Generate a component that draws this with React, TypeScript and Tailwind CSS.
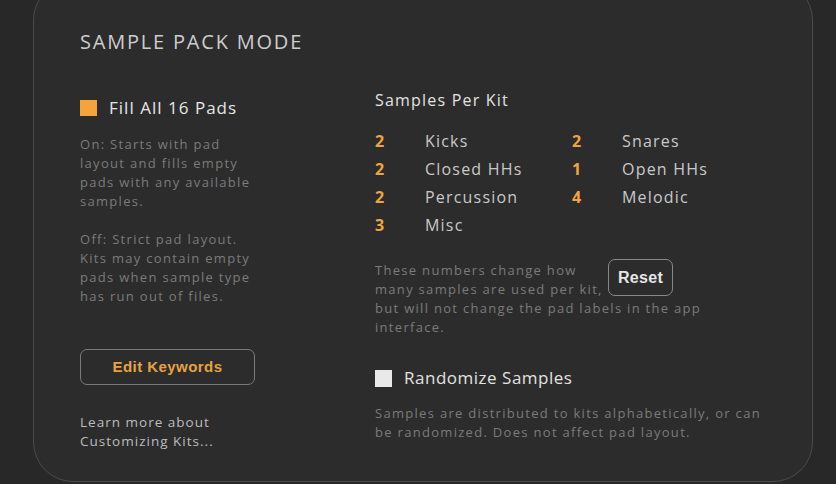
import React from "react";

const rowsLeft = [
  ["2", "Kicks"],
  ["2", "Closed HHs"],
  ["2", "Percussion"],
  ["3", "Misc"],
];
const rowsRight = [
  ["2", "Snares"],
  ["1", "Open HHs"],
  ["4", "Melodic"],
];

function Row({ n, label }: { n: string; label: string }) {
  return (
    <div className="flex h-[28px] items-center">
      <span className="w-[50px] text-[16px] font-bold text-[#f0a53a]">{n}</span>
      <span className="text-[16px] tracking-[0.075em] text-[#c9c9c9]">{label}</span>
    </div>
  );
}

export default function App() {
  return (
    <div
      className="w-[836px] h-[484px] overflow-hidden bg-[#282828]"
      style={{ fontFamily: "'Open Sans', 'Noto Sans', sans-serif" }}
    >
      <div className="ml-[33px] mt-[-20px] w-[780px] h-[502px] rounded-[40px] border border-[#4b4b4b] bg-[#2c2c2c] pl-[46px] pt-[47px]">
        <div className="h-[28px] leading-[28px] text-[20px] tracking-[0.09em] text-[#cdcdcd]">
          SAMPLE PACK MODE
        </div>
        <div className="mt-[12px] flex">
          <div className="w-[295px] shrink-0">
            <div className="mt-[25px] flex h-[30px] items-center">
              <div className="h-[16px] w-[17px] bg-[#f5a33a]" />
              <span className="ml-[12px] text-[17px] tracking-[0.06em] text-[#e6e6e6]">
                Fill All 16 Pads
              </span>
            </div>
            <div className="mt-[12px] text-[13px] leading-[19px] tracking-[0.1em] text-[#7b7b7b]">
              <p>
                On: Starts with pad
                <br />
                layout and fills empty
                <br />
                pads with any available
                <br />
                samples.
              </p>
              <p className="mt-[19px]">
                Off: Strict pad layout.
                <br />
                Kits may contain empty
                <br />
                pads when sample type
                <br />
                has run out of files.
              </p>
            </div>
            <button
              className="mt-[43px] flex h-[36px] w-[175px] items-center justify-center rounded-[7px] border-[1.5px] border-[#7a7a7a] text-[15px] font-semibold tracking-[0.03em] text-[#e9a23b]"
              style={{ fontFamily: "'Liberation Sans', Arial, sans-serif" }}
            >
              Edit Keywords
            </button>
            <div className="mt-[28px] text-[13.5px] leading-[19px] tracking-[0.075em] text-[#bcbcbc]">
              Learn more about
              <br />
              Customizing Kits...
            </div>
          </div>
          <div className="flex-1">
            <div className="mt-[18px] h-[28px] leading-[28px] text-[16px] font-medium tracking-[0.075em] text-[#e2e2e2]">
              Samples Per Kit
            </div>
            <div className="mt-[13px] flex">
              <div className="w-[197px]">
                {rowsLeft.map(([n, l]) => (
                  <Row key={l} n={n} label={l} />
                ))}
              </div>
              <div>
                {rowsRight.map(([n, l]) => (
                  <Row key={l} n={n} label={l} />
                ))}
              </div>
            </div>
            <div className="mt-[22px] text-[13px] leading-[19px] tracking-[0.1em] text-[#7b7b7b]">
              <div className="flex items-start">
                <p className="w-[233px] whitespace-nowrap">
                  These numbers change how
                  <br />
                  many samples are used per kit,
                </p>
                <button
                  className="mt-[-2px] flex h-[37px] w-[65px] items-center justify-center rounded-[7px] border-[1.5px] border-[#888888] text-[16px] font-semibold tracking-[0.02em] text-[#e6e6e6]"
                  style={{ fontFamily: "'Liberation Sans', Arial, sans-serif" }}
                >
                  Reset
                </button>
              </div>
              <p className="whitespace-nowrap">
                but will not change the pad labels in the app
                <br />
                interface.
              </p>
            </div>
            <div className="mt-[26px] flex h-[30px] items-center">
              <div className="h-[17px] w-[17px] bg-[#e9e9e9]" />
              <span className="ml-[12px] text-[17px] tracking-[0.03em] text-[#e2e2e2]">
                Randomize Samples
              </span>
            </div>
            <div className="mt-[11px] whitespace-nowrap text-[13px] leading-[19px] tracking-[0.1em] text-[#7b7b7b]">
              Samples are distributed to kits alphabetically, or can
              <br />
              be randomized. Does not affect pad layout.
            </div>
          </div>
        </div>
      </div>
    </div>
  );
}
